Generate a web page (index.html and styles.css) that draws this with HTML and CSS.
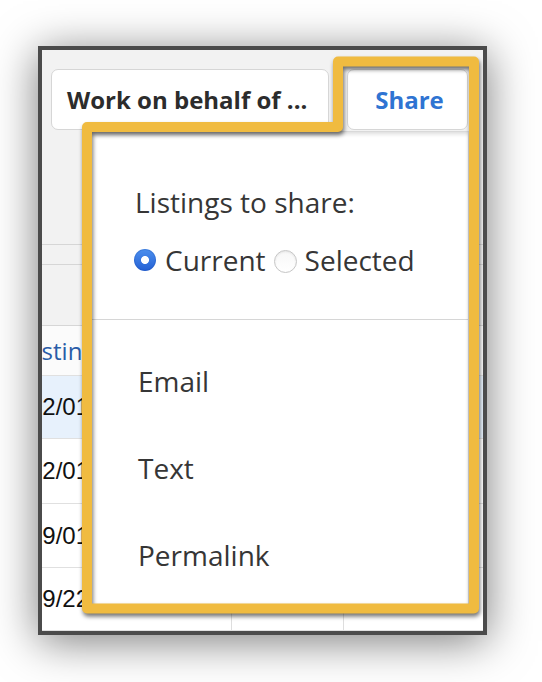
FILE: index.html
```html
<!DOCTYPE html>
<html lang="en">
<head>
<meta charset="utf-8">
<title>Share listings</title>
<link rel="stylesheet" href="styles.css">
</head>
<body>
<div class="frame">
  <div class="toolbar">
    <button class="btn btn-behalf">Work on behalf of ...</button>
    <button class="btn btn-share">Share</button>
  </div>
  <div class="band band1"></div>
  <div class="band band2"></div>
  <div class="table">
    <div class="row head">
      <div class="cell c1"><span class="link">Listing</span></div>
      <div class="cell c2"></div>
      <div class="cell c3"></div>
    </div>
    <div class="row sel r1">
      <div class="cell c1"><span class="date">02/01</span></div>
      <div class="cell c2"></div>
      <div class="cell c3"></div>
    </div>
    <div class="row r2">
      <div class="cell c1"><span class="date">02/01</span></div>
      <div class="cell c2"></div>
      <div class="cell c3"></div>
    </div>
    <div class="row r3">
      <div class="cell c1"><span class="date">09/01</span></div>
      <div class="cell c2"></div>
      <div class="cell c3"></div>
    </div>
    <div class="row r4">
      <div class="cell c1"><span class="date">09/22</span></div>
      <div class="cell c2"></div>
      <div class="cell c3"></div>
    </div>
  </div>

  <div class="share-menu">
    <div class="share-top">
      <div class="share-title">Listings to share:</div>
      <div class="radio-row">
        <input type="radio" class="radio on" name="scope" checked>
        <span>Current</span>
        <input type="radio" class="radio off" name="scope">
        <span>Selected</span>
      </div>
    </div>
    <div class="share-list">
      <div class="share-item">Email</div>
      <div class="share-item">Text</div>
      <div class="share-item">Permalink</div>
    </div>
  </div>

  <svg class="highlight" viewBox="0 0 441 581" width="441" height="581">
    <path d="M45 77H296V11.5H432V558.5H45Z" fill="none" stroke="#f0bb40" stroke-width="10" stroke-linejoin="round"/>
  </svg>
</div>
</body>
</html>
```

FILE: styles.css
```css
* { box-sizing: border-box; }
html, body { margin: 0; padding: 0; background: #fff; }
body {
  width: 542px;
  height: 682px;
  overflow: hidden;
  font-family: "Open Sans", "DejaVu Sans", sans-serif;
}
.frame {
  position: relative;
  margin: 46px 0 0 38px;
  width: 449px;
  height: 589px;
  border: 4px solid #4b4b4b;
  background: #f2f2f2;
  overflow: hidden;
  box-shadow: 0 6px 42px rgba(0, 0, 0, 0.52);
}
.toolbar {
  height: 195px;
  display: flex;
  align-items: flex-start;
  gap: 18px;
  padding: 19px 15px 0 9px;
  border-bottom: 1px solid #d6d6d6;
}
.btn {
  height: 61px;
  margin: 0;
  padding: 0;
  background: #fff;
  border: 1.5px solid #d6d6d6;
  border-radius: 7px;
  font-family: "Open Sans", sans-serif;
  font-weight: 700;
  font-size: 24px;
  white-space: nowrap;
}
.btn-behalf {
  width: 278px;
  text-align: left;
  padding-left: 15px;
  color: #2c2c2c;
}
.btn-share {
  width: 121px;
  padding-left: 4px;
  color: #2f74d2;
}
.band1 { height: 20px; border-bottom: 1px solid #d6d6d6; }
.band2 { height: 61px; border-bottom: 1px solid #d6d6d6; }

.row {
  display: flex;
  background: #fff;
  border-bottom: 1px solid #e0e0e0;
}
.row.head { height: 50px; background: #fbfbfb; }
.r1 { height: 63px; }
.r2 { height: 65px; }
.r3 { height: 64px; }
.r4 { height: 63px; }
.row.sel { background: #e7f1fc; }
.cell {
  display: flex;
  align-items: center;
  overflow: hidden;
  white-space: nowrap;
}
.c1 { width: 189px; }
.c2 { width: 112px; border-left: 1.5px solid #dedede; }
.c3 { flex: 1; border-left: 1.5px solid #dedede; }
.date {
  font-family: "Liberation Sans", Arial, sans-serif;
  font-size: 24px;
  color: #111;
  margin-left: -13px;
}
.link {
  font-size: 24px;
  color: #2a5da8;
  margin-left: -19px;
}

.share-menu {
  position: absolute;
  left: 48px;
  top: 81px;
  width: 379px;
  height: 480px;
  background: #fff;
  border-top: 1px solid #d9d9d9;
  border-right: 1px solid #dcdcdc;
  box-shadow: inset 0 5px 4px -3px rgba(0, 0, 0, 0.14);
  color: #363636;
  font-size: 28px;
}
.share-top {
  padding: 52px 0 41px 45px;
  border-bottom: 1px solid #d6d6d6;
}
.share-title { line-height: 37px; }
.radio-row {
  display: flex;
  align-items: center;
  height: 36px;
  margin-top: 21px;
  margin-left: -1px;
  line-height: 36px;
}
.radio {
  -webkit-appearance: none;
  appearance: none;
  width: 22px;
  height: 22px;
  margin: 0 9px 0 0;
  border-radius: 50%;
  flex: none;
}
.radio.on {
  background:
    radial-gradient(circle, #fff 0 3.6px, transparent 4.4px),
    linear-gradient(#4d90ee, #2460d4);
  box-shadow: inset 0 0 0 1px rgba(20, 70, 170, 0.25);
}
.radio.off {
  width: 23px;
  height: 23px;
  margin-left: 8px;
  margin-right: 8px;
  margin-top: 3px;
  background: linear-gradient(#f7f7f7, #fff);
  border: 1px solid #c6c6c6;
  box-shadow: inset 0 1px 2px rgba(0, 0, 0, 0.08);
}
.share-list { padding-top: 17px; }
.share-item {
  height: 87px;
  display: flex;
  align-items: center;
  padding-left: 48px;
}

.highlight {
  position: absolute;
  left: 0;
  top: 0;
  filter: drop-shadow(1px 3px 2px rgba(0, 0, 0, 0.55));
  pointer-events: none;
}
```
